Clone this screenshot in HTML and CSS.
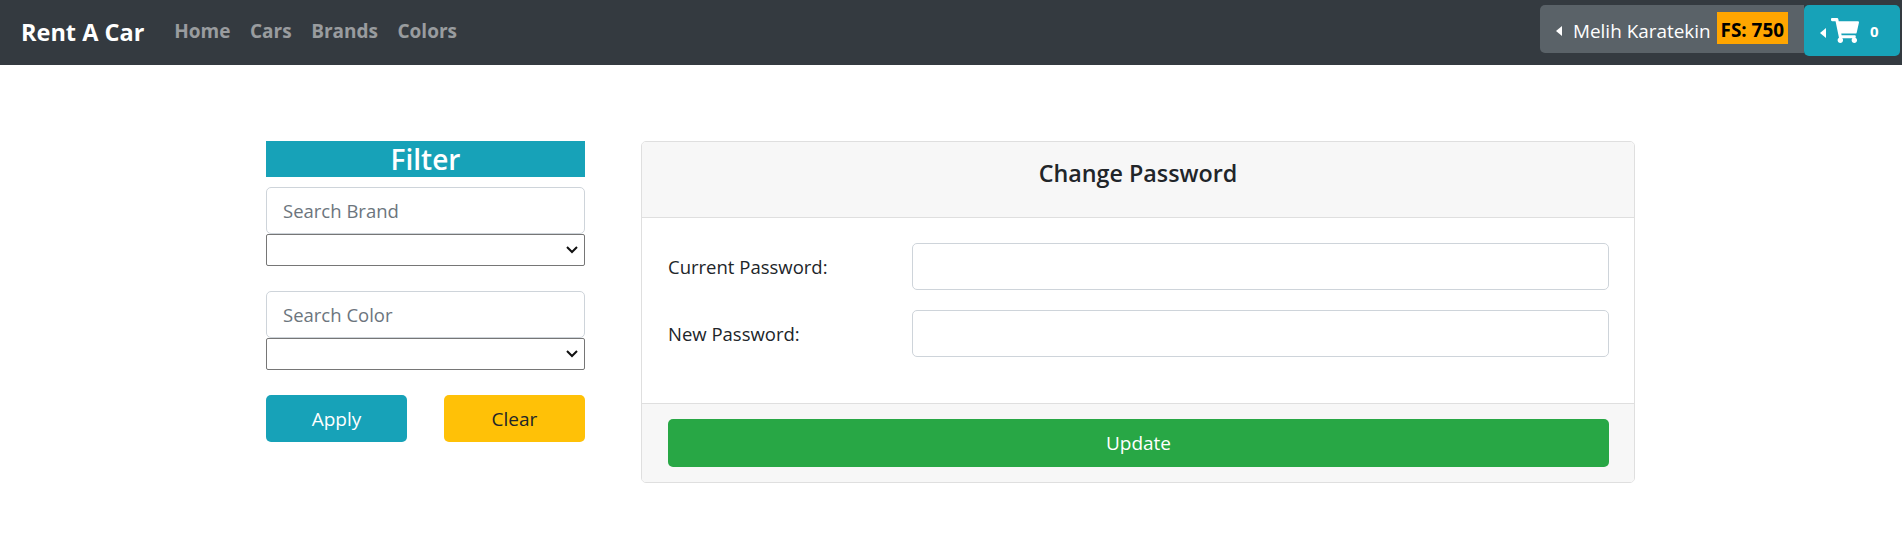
FILE: index.html
```html
<!DOCTYPE html>
<html lang="en">
<head>
    <meta charset="UTF-8">
    <meta name="viewport" content="width=device-width, initial-scale=1.0">
    <title>Rent A Car</title>
    <link rel="stylesheet" href="styles.css">
</head>
<body>
    <!-- Top navigation -->
    <nav class="navbar">
        <a class="brand" href="#">Rent A Car</a>
        <div class="nav-links">
            <a href="#">Home</a>
            <a href="#">Cars</a>
            <a href="#">Brands</a>
            <a href="#">Colors</a>
        </div>
        <div class="nav-right">
            <button class="user-btn">
                <span class="caret"></span>
                <span class="user-name">Melih Karatekin</span>
                <span class="score">FS: 750</span>
            </button>
            <button class="cart-btn">
                <span class="caret caret-cart"></span>
                <svg class="cart-icon" viewBox="0 0 576 512" width="28" height="25">
                    <path fill="#fff" d="M528.1 301.3l47.3-208C578.8 78.3 567.4 64 552 64H159.2l-9.2-44.8C147.8 8 137.9 0 126.5 0H24C10.7 0 0 10.7 0 24v16c0 13.300 10.700 24 24 24h69.900l70.200 343.400C147.300 417.100 136 435.200 136 456c0 30.900 25.100 56 56 56s56-25.100 56-56c0-15.700-6.400-29.800-16.800-40h209.600C430.400 426.200 424 440.300 424 456c0 30.900 25.100 56 56 56s56-25.100 56-56c0-22.200-12.900-41.300-31.600-50.400l5.500-24.300c3.400-15-8-29.300-23.400-29.300H218.100l-6.500-32h293.100c11.200 0 20.900-7.800 23.400-18.700z"/>
                </svg>
                <span class="cart-count">0</span>
            </button>
        </div>
    </nav>

    <main class="page">
        <!-- Filter column -->
        <aside class="filter">
            <h2 class="filter-title">Filter</h2>
            <div class="filter-group">
                <input type="text" class="form-control" placeholder="Search Brand">
                <select class="filter-select"><option></option></select>
            </div>
            <div class="filter-group">
                <input type="text" class="form-control" placeholder="Search Color">
                <select class="filter-select"><option></option></select>
            </div>
            <div class="filter-actions">
                <button class="btn btn-info">Apply</button>
                <button class="btn btn-warning">Clear</button>
            </div>
        </aside>

        <!-- Change password card -->
        <section class="card">
            <div class="card-header">Change Password</div>
            <div class="card-body">
                <div class="form-row">
                    <label for="currentPassword">Current Password:</label>
                    <input type="password" id="currentPassword" class="form-control">
                </div>
                <div class="form-row">
                    <label for="newPassword">New Password:</label>
                    <input type="password" id="newPassword" class="form-control">
                </div>
            </div>
            <div class="card-footer">
                <button class="btn btn-success">Update</button>
            </div>
        </section>
    </main>
</body>
</html>
```

FILE: styles.css
```css
* {
    margin: 0;
    padding: 0;
    box-sizing: border-box;
}

body {
    font-family: 'Open Sans', 'Noto Sans', sans-serif;
    font-size: 18.5px;
    color: #212529;
    background: #fff;
}

a {
    text-decoration: none;
}

button {
    font-family: inherit;
    border: none;
    cursor: pointer;
}

/* Navbar */
.navbar {
    display: flex;
    align-items: flex-start;
    height: 65px;
    background: #343a40;
    padding-left: 21px;
}

.brand {
    color: #fff;
    font-size: 23.5px;
    font-weight: 700;
    line-height: 32px;
    margin-top: 16px;
}

.nav-links {
    display: flex;
    gap: 19.5px;
    margin-left: 30px;
    margin-top: 17px;
}

.nav-links a {
    color: rgba(255, 255, 255, 0.5);
    font-size: 19px;
    font-weight: 700;
    line-height: 28px;
}

.nav-right {
    display: flex;
    align-items: flex-start;
    margin-left: auto;
    margin-top: 5px;
    margin-right: 2px;
}

.caret {
    display: inline-block;
    width: 0;
    height: 0;
    border-top: 5px solid transparent;
    border-bottom: 5px solid transparent;
    border-right: 6px solid #fff;
}

.user-btn {
    display: flex;
    align-items: center;
    width: 264px;
    height: 48px;
    background: #5a6268;
    color: #fff;
    font-size: 18.9px;
    border-radius: 5px 0 0 5px;
    padding-left: 16px;
}

.user-btn .caret {
    margin-top: 4px;
}

.user-name {
    margin-left: 11px;
    margin-top: 4px;
}

.score {
    margin-left: 6px;
    margin-bottom: 2px;
    background: orange;
    color: #000;
    font-weight: 700;
    line-height: 26px;
    padding: 5px 4px 1px;
}

.cart-btn {
    display: flex;
    align-items: center;
    width: 96px;
    height: 51px;
    background: #17a2b8;
    color: #fff;
    border-radius: 5px;
    padding-left: 16px;
}

.caret-cart {
    margin-top: 4px;
}

.cart-icon {
    margin-left: 5px;
}

.cart-count {
    margin-left: 11px;
    font-size: 15px;
    font-weight: 700;
}

/* Page */
.page {
    display: flex;
    align-items: flex-start;
    gap: 56px;
    padding: 76px 0 0 266px;
}

.filter {
    width: 319px;
}

.filter-title {
    background: #17a2b8;
    color: #fff;
    font-size: 28px;
    font-weight: 600;
    line-height: 36px;
    text-align: center;
    margin-bottom: 10px;
}

.filter-group {
    margin-bottom: 25px;
}

.form-control {
    display: block;
    width: 100%;
    height: 47px;
    padding: 6px 16px;
    font-family: inherit;
    font-size: 18.5px;
    color: #495057;
    background: #fff;
    border: 1px solid #ced4da;
    border-radius: 5px;
}

.form-control::placeholder {
    color: #6c757d;
}

.filter-select {
    display: block;
    width: 100%;
    height: 32px;
    appearance: none;
    background: #fff url("data:image/svg+xml,%3Csvg xmlns='http://www.w3.org/2000/svg' width='12' height='8'%3E%3Cpath d='M1 1l5 5 5-5' fill='none' stroke='%23111' stroke-width='2'/%3E%3C/svg%3E") no-repeat right 6px center;
    border: 1px solid #767676;
    border-radius: 2px;
    font-family: inherit;
}

.filter-actions {
    display: flex;
    justify-content: space-between;
}

.btn {
    height: 47px;
    font-size: 19px;
    border-radius: 5px;
}

.filter-actions .btn {
    width: 141px;
}

.btn-info {
    background: #17a2b8;
    color: #fff;
}

.btn-warning {
    background: #ffc107;
    color: #212529;
}

.btn-success {
    width: 100%;
    height: 48px;
    background: #28a745;
    color: #fff;
}

/* Card */
.card {
    width: 994px;
    border: 1px solid #dfdfdf;
    border-radius: 5px;
    overflow: hidden;
}

.card-header {
    height: 76px;
    background: #f7f7f7;
    border-bottom: 1px solid #dfdfdf;
    text-align: center;
    font-size: 23.3px;
    font-weight: 600;
    line-height: 63px;
}

.card-body {
    display: flex;
    flex-direction: column;
    gap: 20px;
    height: 185px;
    padding: 25px 25px 0 26px;
}

.form-row {
    display: flex;
    align-items: center;
}

.form-row label {
    width: 244px;
    flex-shrink: 0;
}

.card-footer {
    height: 79px;
    background: #f7f7f7;
    border-top: 1px solid #dfdfdf;
    padding: 15px 25px 0 26px;
}
```
